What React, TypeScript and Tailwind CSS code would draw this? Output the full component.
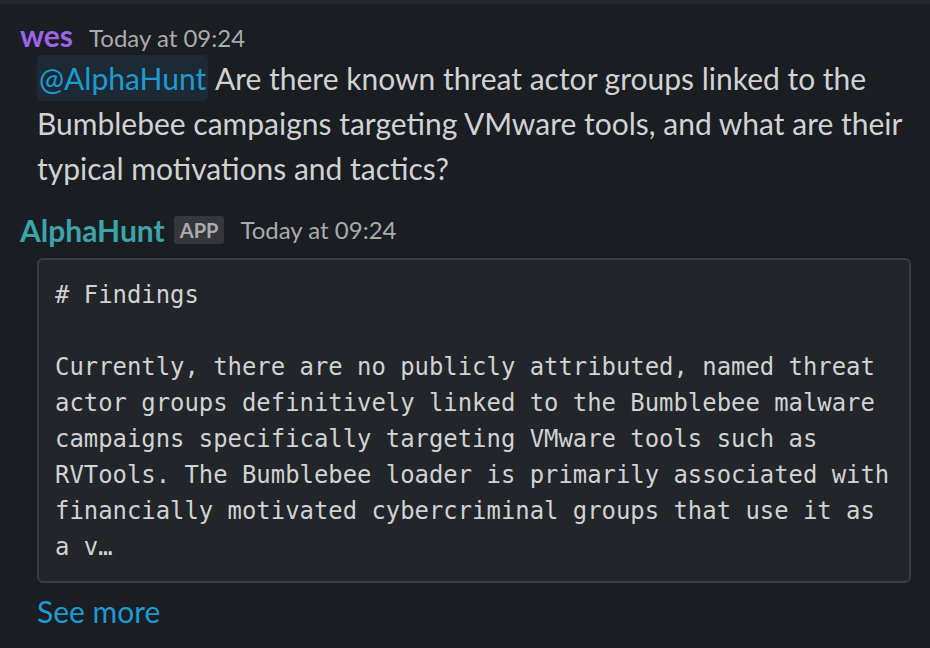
import React from 'react';

const CODE_LINES = [
  '# Findings',
  '',
  'Currently, there are no publicly attributed, named threat',
  'actor groups definitively linked to the Bumblebee malware',
  'campaigns specifically targeting VMware tools such as',
  'RVTools. The Bumblebee loader is primarily associated with',
  'financially motivated cybercriminal groups that use it as',
  'a v…',
];

export default function App() {
  return (
    <div
      className="w-[930px] h-[648px] overflow-hidden bg-[#1a1d21] text-[#d1d2d3]"
      style={{ fontFamily: 'Lato, "Noto Sans", sans-serif' }}
    >
      <div className="h-[4px] bg-[#222529]" />

      {/* user message */}
      <div className="pl-[20px] pt-[16px]">
        <div className="flex items-baseline gap-[16px]">
          <span className="text-[30px] font-bold text-[#9d63e8] leading-[30px]">wes</span>
          <span className="text-[24px] text-[#ababad] leading-[30px]">Today at 09:24</span>
        </div>
        <p className="ml-[17px] mt-[3px] pr-[20px] text-[30px] leading-[45px] text-[#d1d2d3]">
          <span className="rounded-[5px] bg-[#1d2a35] px-[2px] py-[5px] text-[#1d9bd1]">@AlphaHunt</span> Are
          there known threat actor groups linked to the Bumblebee campaigns targeting VMware tools, and what are
          their typical motivations and tactics?
        </p>
      </div>

      {/* app reply */}
      <div className="pl-[20px] pt-[21px]">
        <div className="flex items-center">
          <span className="text-[30px] font-bold text-[#3ba4a9] leading-[36px]">AlphaHunt</span>
          <span className="ml-[9px] rounded-[3px] bg-[#35373b] px-[6px] text-[20px] font-bold leading-[28px] text-[#ababad]">
            APP
          </span>
          <span className="ml-[16px] text-[24px] text-[#ababad] leading-[30px]">Today at 09:24</span>
        </div>
        <div className="ml-[17px] mr-[19px] mt-[10px] rounded-[6px] border-[2px] border-[#3a3c40] bg-[#222529] px-[16px] pt-[17px] pb-[16px]">
          <pre
            className="text-[23.9px] leading-[36px] text-[#d1d2d3] whitespace-pre"
            style={{ fontFamily: '"DejaVu Sans Mono", monospace' }}
          >
            {CODE_LINES.join('\n')}
          </pre>
        </div>
        <div className="ml-[17px] mt-[10px] text-[30px] leading-[36px] text-[#1d9bd1]">See more</div>
      </div>
    </div>
  );
}
